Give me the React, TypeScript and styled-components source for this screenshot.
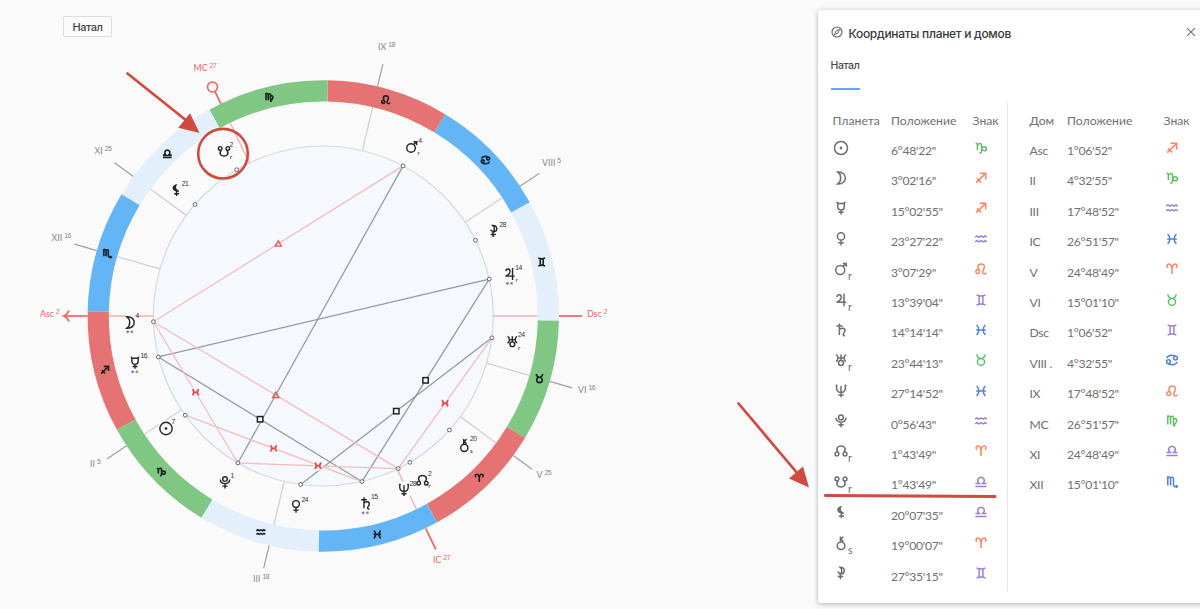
import React from 'react'
import styled, { createGlobalStyle } from 'styled-components'

const GlobalStyle = createGlobalStyle`
  * {
    box-sizing: border-box;
  }
  body {
    margin: 0;
    background-color: #fafafa;
    font-family: Lato, 'Open Sans', sans-serif;
    overflow: hidden;
  }
`

type GlyphShape = { line: string; fill?: string }

// all glyphs are drawn around 0,0 in a 16px box
const PLANETS: Record<string, GlyphShape> = {
  sun: {
    line: 'M-6.5 0A6.5 6.5 0 1 0 6.5 0A6.5 6.5 0 1 0 -6.5 0Z',
    fill: 'M-1.4 0A1.4 1.4 0 1 0 1.4 0A1.4 1.4 0 1 0 -1.4 0Z',
  },
  moon: { line: 'M-3.2 -6C1.8 -6.3 4.4 -3.2 4.4 0S1.8 6.3 -3.2 6C.6 3.6 .6 -3.6 -3.2 -6Z' },
  mercury: {
    line: 'M-4.2 -6.2C-3.9 -5 -3.2 -4.5 -2 -4.5H2C3.2 -4.5 3.9 -5 4.2 -6.2M-3.3 -4.5V-1.2C-3.3 .8 -1.8 2 0 2S3.3 .8 3.3 -1.2V-4.5M0 2V6.5M-2.6 4.3H2.6',
  },
  venus: { line: 'M-3.6 -2.6A3.6 3.6 0 1 0 3.6 -2.6A3.6 3.6 0 1 0 -3.6 -2.6ZM0 1V6.5M-2.8 3.8H2.8' },
  mars: { line: 'M-5.3 1A4.5 4.5 0 1 0 3.7 1A4.5 4.5 0 1 0 -5.3 1ZM2 -2.4L5 -5.5M1.8 -5.6H5.2V-2.2' },
  jupiter: { line: 'M-4 -3C-3.8 -6 .3 -6 .3 -2.9C.3 -.6 -1.6 1.2 -4.4 2.2H5.2M3 -6.3V6.3' },
  saturn: { line: 'M-1.6 -6.5V5M-4.6 -3.9H1.6M-1.6 -.4C0 -2.4 4 -2.4 4 .4C4 2.4 2.2 3 2.2 4.6C2.2 5.6 3.2 6 4.2 5.6' },
  uranus: {
    line: 'M-5 -5.4C-2.4 -4.4 -2.4 .6 -5 1.6M5 -5.4C2.4 -4.4 2.4 .6 5 1.6M-3.2 -2H3.2M0 -5.6V.6M-2.5 2.9A2.5 2.5 0 1 0 2.5 2.9A2.5 2.5 0 1 0 -2.5 2.9Z',
  },
  neptune: { line: 'M-4.4 -5.6C-5 -.6 -3.2 1.6 0 1.6S5 -.6 4.4 -5.6M0 -5V6.2M-2.7 4H2.7M-5.2 -4.9L-4.3 -5.8L-3.6 -5.2M5.2 -4.9L4.3 -5.8L3.6 -5.2' },
  pluto: {
    line: 'M-2.4 -3.6A2.4 2.4 0 1 0 2.4 -3.6A2.4 2.4 0 1 0 -2.4 -3.6ZM-5 -3.2C-4.6 2.6 4.6 2.6 5 -3.2M0 1.2V6.2M-2.7 3.8H2.7',
  },
  northNode: {
    line: 'M-5.9 3A1.9 1.9 0 1 0 -2.1 3A1.9 1.9 0 1 0 -5.9 3ZM2.1 3A1.9 1.9 0 1 0 5.9 3A1.9 1.9 0 1 0 2.1 3ZM-2.8 1.5C-6 -3 -2.8 -5 0 -5S6 -3 2.8 1.5',
  },
  southNode: {
    line: 'M-5.9 -3A1.9 1.9 0 1 0 -2.1 -3A1.9 1.9 0 1 0 -5.9 -3ZM2.1 -3A1.9 1.9 0 1 0 5.9 -3A1.9 1.9 0 1 0 2.1 -3ZM-2.8 -1.5C-6 3 -2.8 5 0 5S6 3 2.8 -1.5',
  },
  lilith: {
    line: 'M.4 .8V6.3M-2.2 4H3',
    fill: 'M1.4 -6.3C-5.6 -5.6 -5.6 1 1.8 2.1C3.2 1.9 3.2 .8 2.4 .3C-.6 -.6 -.8 -4.2 1.4 -6.3Z',
  },
  chiron: {
    line: 'M-3.8 2.7A3.8 3.8 0 1 0 3.8 2.7A3.8 3.8 0 1 0 -3.8 2.7ZM-.6 -6.5V-.8M2.4 -6.3L-.4 -3.9L2.4 -1.7',
  },
  selena: {
    line: 'M-1 -5.8C4.6 -6 4.6 .8 -.6 1C1.2 -.8 1.4 -3.8 -1 -5.8ZM-.6 1V6.3M-3.2 3.6H2.2M-3.4 -1.4L-.6 1',
  },
}

const SIGNS: Record<string, GlyphShape> = {
  aries: { line: 'M0 5V1C0 -3.4 -1.4 -5 -3.1 -5C-5.4 -5 -5.6 -2 -3.8 -1.4M0 1C0 -3.4 1.4 -5 3.1 -5C5.4 -5 5.6 -2 3.8 -1.4' },
  taurus: { line: 'M-3.6 1.9A3.6 3.4 0 1 0 3.6 1.9A3.6 3.4 0 1 0 -3.6 1.9ZM-4.3 -5.6C-3.4 -2.4 -2 -1.5 0 -1.5S3.4 -2.4 4.3 -5.6' },
  gemini: { line: 'M-4.4 -5C-2 -4 2 -4 4.4 -5M-4.4 5C-2 4 2 4 4.4 5M-1.9 -4.3V4.3M1.9 -4.3V4.3' },
  cancer: {
    line: 'M-5.2 -2C-3.6 -5.6 2.4 -5.4 5 -3M5.2 2C3.6 5.6 -2.4 5.4 -5 3M1.6 -1.9A1.9 1.9 0 1 0 5.4 -1.9A1.9 1.9 0 1 0 1.6 -1.9ZM-5.4 1.7A1.9 1.9 0 1 0 -1.6 1.7A1.9 1.9 0 1 0 -5.4 1.7Z',
  },
  leo: {
    line: 'M-5.2 2.6A2 2 0 1 0 -1.2 2.6A2 2 0 1 0 -5.2 2.6ZM-1.6 1.6C-3.4 -1.2 -4 -5 .2 -5C4.4 -5 3.8 -1.8 2.4 .8C1 3.4 1.8 5 3.4 5C4.4 5 5 4.4 5.2 3.6',
  },
  virgo: { line: 'M-5.2 -4.4L-4.2 -5V3.4M-4.2 -4C-3.2 -5.2 -1.4 -5.2 -1.4 -3.4V3.4M-1.4 -4C-.4 -5.2 1.5 -5.2 1.5 -3.4V2.4C1.5 4 2.4 4.8 3.2 5.2M1.5 -1.4C3 -3.4 5.2 -2.2 4.6 .4C4.2 2.4 2.6 3.6 .8 4.6' },
  libra: { line: 'M-5.6 4.6H5.6M-5.6 1.6H-1.6C-5 -1.4 -2.8 -4.8 0 -4.8S5 -1.4 1.6 1.6H5.6' },
  scorpio: { line: 'M-5.2 -4.4L-4.2 -5V3.4M-4.2 -4C-3.2 -5.2 -1.4 -5.2 -1.4 -3.4V3.4M-1.4 -4C-.4 -5.2 1.5 -5.2 1.5 -3.4V2.4C1.5 4.6 3 5.2 5 4.6M3.8 3.2L5.4 4.5L4.2 5.8' },
  sagittarius: { line: 'M-4.8 4.6L4.6 -4.6M-1.4 -4.7H4.7V1.4M-4 .4L.2 4.4' },
  capricorn: { line: 'M-5.4 -4.8C-4 -5 -3.6 -3.8 -3.6 -2.4V2M-3.6 -2.4C-3 -4.6 .6 -6 .6 -2.4V2.4C.6 4 -.4 5 -1.6 5.2M.6 .8C1.4 -1.8 5.4 -1.8 5.4 .8C5.4 3.6 1.6 3.4 .6 .8' },
  aquarius: { line: 'M-5.8 -1.8L-4 -3L-2 -1.8L0 -3L2.2 -1.8L3.9 -3L5.8 -1.8M-5.8 2.8L-4 1.6L-2 2.8L0 1.6L2.2 2.8L3.9 1.6L5.8 2.8' },
  pisces: { line: 'M-4.4 -5C-1.4 -2.4 -1.4 2.4 -4.4 5M4.4 -5C1.4 -2.4 1.4 2.4 4.4 5M-4.8 0H4.8' },
}

const SIGN_ORDER = [
  'aries',
  'taurus',
  'gemini',
  'cancer',
  'leo',
  'virgo',
  'libra',
  'scorpio',
  'sagittarius',
  'capricorn',
  'aquarius',
  'pisces',
]
const RING_COLORS = ['#e57373', '#81c784', '#e3effb', '#64b5f6']
const SIGN_COLORS = ['#f98660', '#5cbf62', '#9b7fd6', '#4f80dc']

const Shape = ({ shape, color, width = 1.5 }: { shape: GlyphShape; color: string; width?: number }) => (
  <>
    <path d={shape.line} fill="none" stroke={color} strokeWidth={width} />
    {shape.fill && <path d={shape.fill} fill={color} />}
  </>
)

const Page = styled.div`
  position: relative;
  display: flex;
  width: 1200px;
  height: 609px;
  overflow: hidden;
  background-color: #fafafa;
`

const ChartArea = styled.main`
  position: relative;
  flex: 0 0 818px;
`

const ChartSvg = styled.svg`
  display: block;
  font-family: Lato, sans-serif;
`

const Degree = styled.text`
  font-family: 'Liberation Sans', sans-serif;
  font-size: 6.8px;
  letter-spacing: -0.5px;
  fill: #333;
`

const HouseDegree = styled.tspan`
  font-family: 'Liberation Sans', sans-serif;
  font-size: 6.8px;
  letter-spacing: -0.4px;
`

const ModeButton = styled.button`
  position: absolute;
  top: 16px;
  left: 63px;
  width: 49px;
  height: 21px;
  padding: 0;
  border: 1px solid #dedede;
  border-radius: 2px;
  background-color: #fbfbfb;
  color: #444;
  font: 500 11px Inter, sans-serif;
  letter-spacing: -0.5px;
`

const Panel = styled.aside`
  flex: 0 0 400px;
  height: 593px;
  margin-top: 10px;
  border-radius: 3px;
  background-color: #fff;
  box-shadow: 0 1px 5px rgba(0, 0, 0, 0.3);
`

const PanelHeader = styled.header`
  display: flex;
  align-items: center;
  width: 382px;
  height: 44px;
  padding: 0 4px 0 13px;
`

const PanelTitle = styled.h1`
  flex: 1;
  margin: 3px 0 0 5.5px;
  color: #383838;
  font: 500 12px/16px Inter, sans-serif;
  letter-spacing: -0.3px;
`

const Tabs = styled.nav`
  display: flex;
  height: 36px;
  padding-left: 12.5px;
`

const Tab = styled.div`
  width: 29px;
  border-bottom: 2px solid #64a8f5;
  color: #484848;
  font: 500 10.5px/24px Inter, sans-serif;
  letter-spacing: -0.4px;
  white-space: nowrap;
`

const Tables = styled.div`
  display: flex;
  height: 488px;
  margin-top: 13px;
`

const Table = styled.section<{ $left: number; $width: number }>`
  width: ${({ $width }) => $width}px;
  padding: 2.5px 0 0 ${({ $left }) => $left}px;
  color: #707070;
  & + & {
    border-left: 1px solid #e6e6e6;
  }
`

const Row = styled.div<{ $columns: string }>`
  display: grid;
  grid-template-columns: ${({ $columns }) => $columns};
  align-items: center;
  height: 30.4px;
  font-size: 12.2px;
  line-height: 16px;
  letter-spacing: -0.32px;
  white-space: nowrap;
`

const HeadCell = styled.span`
  font-size: 12.2px;
  letter-spacing: 0;
`

const GlyphCell = styled.span`
  display: flex;
  height: 23px;
  svg {
    display: block;
  }
`

const Motion = styled.span`
  margin: 7px 0 0 -0.5px;
  font-size: 10.5px;
  line-height: 16px;
`

const Annotations = styled.svg`
  position: absolute;
  top: 0;
  left: 0;
  pointer-events: none;
`

const CX = 323.3
const CY = 316
const ASC = 241.114

const point = (longitude: number, r: number): [number, number] => {
  const a = ((longitude - ASC) * Math.PI) / 180
  return [CX - r * Math.cos(a), CY + r * Math.sin(a)]
}

const ringPath = (start: number) => {
  const [x1, y1] = point(start, 235.7)
  const [x2, y2] = point(start + 30, 235.7)
  const [x3, y3] = point(start + 30, 214.5)
  const [x4, y4] = point(start, 214.5)
  return `M${x1} ${y1}A235.7 235.7 0 0 0 ${x2} ${y2}L${x3} ${y3}A214.5 214.5 0 0 1 ${x4} ${y4}Z`
}

const houses = [
  { name: 'Asc', cell: 'Asc', pos: '1°06\'52"', sign: 8, lon: 241.114, deg: '2', x: 40, y: 316.5, axis: true },
  { name: 'II', cell: 'II', pos: '4°32\'55"', sign: 9, lon: 274.549, deg: '5', x: 90, y: 467 },
  { name: 'III', cell: 'III', pos: '17°48\'52"', sign: 10, lon: 317.814, deg: '18', x: 253, y: 582 },
  { name: 'IC', cell: 'IC', pos: '26°51\'57"', sign: 11, lon: 356.866, deg: '27', x: 433, y: 562.5, axis: true },
  { name: 'V', cell: 'V', pos: '24°48\'49"', sign: 0, lon: 24.814, deg: '25', x: 536.5, y: 478 },
  { name: 'VI', cell: 'VI', pos: '15°01\'10"', sign: 1, lon: 45.019, deg: '16', x: 578, y: 392.5 },
  { name: 'Dsc', cell: 'Dsc', pos: '1°06\'52"', sign: 2, lon: 61.114, deg: '2', x: 587, y: 317, axis: true },
  { name: 'VIII', cell: 'VIII .', pos: '4°32\'55"', sign: 3, lon: 94.549, deg: '5', x: 542, y: 166 },
  { name: 'IX', cell: 'IX', pos: '17°48\'52"', sign: 4, lon: 137.814, deg: '18', x: 378, y: 50 },
  { name: 'MC', cell: 'MC', pos: '26°51\'57"', sign: 5, lon: 176.866, deg: '27', x: 193.5, y: 70.5, axis: true },
  { name: 'XI', cell: 'XI', pos: '24°48\'49"', sign: 6, lon: 204.814, deg: '25', x: 94.5, y: 154 },
  { name: 'XII', cell: 'XII', pos: '15°01\'10"', sign: 7, lon: 225.019, deg: '16', x: 51.5, y: 240.5 },
]

const planets = [
  { id: 'sun', pos: '6°48\'22"', sign: 9, lon: 276.806, deg: '7', x: 166, y: 428.5 },
  { id: 'moon', pos: '3°02\'16"', sign: 8, lon: 243.038, deg: '4', x: 130, y: 322.5, dots: true },
  { id: 'mercury', pos: '15°02\'55"', sign: 8, lon: 255.049, deg: '16', x: 135, y: 362.5, dots: true },
  { id: 'venus', pos: '23°27\'22"', sign: 10, lon: 323.456, deg: '24', x: 296, y: 506.5 },
  { id: 'mars', pos: '3°07\'29"', sign: 4, lon: 123.125, deg: '4', x: 411.8, y: 147, motion: 'r' },
  { id: 'jupiter', pos: '13°39\'04"', sign: 2, lon: 73.651, deg: '14', x: 509.7, y: 274, motion: 'r', dots: true },
  { id: 'saturn', pos: '14°14\'14"', sign: 11, lon: 344.237, deg: '15', x: 365.5, y: 503.5, dots: true },
  { id: 'uranus', pos: '23°44\'13"', sign: 1, lon: 53.737, deg: '24', x: 512.3, y: 341.5, motion: 'r' },
  { id: 'neptune', pos: '27°14\'52"', sign: 11, lon: 357.248, deg: '28', x: 404, y: 490 },
  { id: 'pluto', pos: '0°56\'43"', sign: 10, lon: 300.945, deg: '1', x: 225, y: 482.5 },
  { id: 'northNode', pos: '1°43\'49"', sign: 0, lon: 1.73, deg: '2', x: 422.5, y: 480.3, motion: 'r' },
  { id: 'southNode', pos: '1°43\'49"', sign: 6, lon: 181.73, deg: '2', x: 224, y: 151.3, motion: 'r' },
  { id: 'lilith', pos: '20°07\'35"', sign: 6, lon: 200.126, deg: '21', x: 176.2, y: 190 },
  { id: 'chiron', pos: '19°00\'07"', sign: 0, lon: 19.002, deg: '20', x: 464.3, y: 445.3, motion: 's' },
  { id: 'selena', pos: '27°35\'15"', sign: 2, lon: 87.588, deg: '28', x: 493.7, y: 231 },
]

const aspects: [string, string, string][] = [
  ['mars', 'pluto', 'opposition'],
  ['mercury', 'jupiter', 'opposition'],
  ['mercury', 'saturn', 'square'],
  ['jupiter', 'saturn', 'square'],
  ['uranus', 'venus', 'square'],
  ['moon', 'mars', 'trine'],
  ['moon', 'neptune', 'trine'],
  ['moon', 'pluto', 'sextile'],
  ['sun', 'saturn', 'sextile'],
  ['pluto', 'neptune', 'sextile'],
  ['uranus', 'neptune', 'sextile'],
]

const aspectLines = aspects.map(([from, to, kind]) => {
  const a = point(planets.find((p) => p.id === from)!.lon, 170)
  const b = point(planets.find((p) => p.id === to)!.lon, 170)
  const hard = kind === 'opposition' || kind === 'square'
  return { a, b, kind, hard, mid: [(a[0] + b[0]) / 2, (a[1] + b[1]) / 2] }
})

const AspectMark = ({ kind }: { kind: string }) => {
  if (kind === 'square') return <rect x="-2.7" y="-2.7" width="5.4" height="5.4" fill="#f5f9fd" stroke="#222" strokeWidth="1.5" />
  if (kind === 'trine') return <path d="M0 -3L3.1 2.4H-3.1Z" fill="none" stroke="#ee5050" strokeWidth="1.3" />
  return <path d="M-3.2 -3C-1.2 -1.4 -1.2 1.4 -3.2 3M3.2 -3C1.2 -1.4 1.2 1.4 3.2 3M-2.6 0H2.6" fill="none" stroke="#ee4444" strokeWidth="1.9" />
}

const ChartWheel: React.FunctionComponent = () => (
  <ChartSvg width="818" height="609" viewBox="0 0 818 609">
    <circle cx={CX} cy={CY} r="170" fill="#f5f9fd" stroke="#d4dadf" strokeWidth="1.2" />
    {SIGN_ORDER.map((sign, i) => {
      const [x, y] = point(i * 30 + 15, 225)
      return (
        <g key={sign}>
          <path d={ringPath(i * 30)} fill={RING_COLORS[i % 4]} />
          <g transform={`translate(${x} ${y}) scale(.78)`}>
            <Shape shape={SIGNS[sign]} color="#1c2422" width={2.1} />
          </g>
        </g>
      )
    })}

    {houses.map((house) => {
      const [x1, y1] = point(house.lon, 170)
      const [x2, y2] = point(house.lon, 214.5)
      const [x3, y3] = point(house.lon, 235.7)
      const [x4, y4] = point(house.lon, house.name === 'MC' ? 249.5 : 259)
      return (
        <g key={house.name}>
          <line x1={x1} y1={y1} x2={x2} y2={y2} stroke={house.axis ? '#f6aeae' : '#d2d2d2'} strokeWidth="1.3" />
          <line x1={x3} y1={y3} x2={x4} y2={y4} stroke={house.axis ? '#f06262' : '#a0a0a0'} strokeWidth={house.axis ? 1.7 : 1.2} />
          <text x={house.x} y={house.y} fontSize="8.8" fill={house.axis ? '#ee6464' : '#868686'}>
            {house.name}
            <HouseDegree dx="2" dy="-3">
              {house.deg}
            </HouseDegree>
          </text>
        </g>
      )
    })}
    <path d="M69 310.5C67.6 313.6 66 315.2 63.8 316C66 316.8 67.6 318.4 69 321.5" fill="none" stroke="#f06262" strokeWidth="1.7" />
    <circle cx="212.5" cy="87" r="5" fill="#fafafa" stroke="#f06262" strokeWidth="1.6" />

    {aspectLines.map(({ a, b, hard }, i) => (
      <line key={i} x1={a[0]} y1={a[1]} x2={b[0]} y2={b[1]} stroke={hard ? '#96999c' : '#f6baba'} strokeWidth="1.25" />
    ))}
    {aspectLines.map(({ kind, mid }, i) =>
      kind === 'opposition' ? null : (
        <g key={i} transform={`translate(${mid[0]} ${mid[1]})`}>
          {kind === 'sextile' && <circle r="5" fill="#f5f9fd" />}
          <AspectMark kind={kind} />
        </g>
      ),
    )}

    {planets.map((planet) => (
      <circle key={planet.id} cx={planet.x} cy={planet.y} r="8.5" fill="#fafafa" />
    ))}
    {planets.map((planet) => {
      const [px, py] = point(planet.lon, 170)
      return (
        <g key={planet.id}>
          <circle cx={px} cy={py} r="1.9" fill="#fff" stroke="#666" strokeWidth="1" />
          <g transform={`translate(${planet.x} ${planet.y})`}>
            <g transform="scale(.95)">
              <Shape shape={PLANETS[planet.id]} color="#262626" width={1.5} />
            </g>
            <Degree x={planet.id === 'mars' ? 6.4 : 5.6} y="-4.2">
              {planet.deg}
            </Degree>
            {planet.motion && (
              <text x="5.8" y="8" fontSize="6.5" fill="#333">
                {planet.motion}
              </text>
            )}
            {planet.dots && (
              <>
                <circle cx="-2.3" cy="9.3" r="1.4" fill="#b45ae0" />
                <circle cx="1.9" cy="9.3" r="1.4" fill="#6db33a" />
              </>
            )}
          </g>
        </g>
      )
    })}
  </ChartSvg>
)

const TableGlyph = ({ shape, color }: { shape: GlyphShape; color: string }) => (
  <svg width="16" height="16" viewBox="-8 -8 16 16">
    <Shape shape={shape} color={color} />
  </svg>
)

const PLANET_COLUMNS = '58.5px 81.5px 26px'
const HOUSE_COLUMNS = '37.5px 96.5px 26px'

const App: React.FunctionComponent = () => {
  return (
    <Page>
      <GlobalStyle />
      <ChartArea>
        <ChartWheel />
        <ModeButton>Натал</ModeButton>
      </ChartArea>

      <Panel>
        <PanelHeader>
          <svg width="12" height="12" viewBox="0 0 12 12" fill="none" stroke="#6a6a6a">
            <circle cx="6" cy="6" r="5" strokeWidth="1.2" />
            <path d="M8.6 3.4L7 7L3.4 8.6L5 5Z" />
          </svg>
          <PanelTitle>Координаты планет и домов</PanelTitle>
          <svg width="10" height="10" viewBox="0 0 10 10" stroke="#777" strokeWidth="1.2">
            <path d="M1.2 1.2L8.8 8.8M8.8 1.2L1.2 8.8" />
          </svg>
        </PanelHeader>
        <Tabs>
          <Tab>Натал</Tab>
        </Tabs>
        <Tables>
          <Table $left={14.5} $width={189}>
            <Row $columns={PLANET_COLUMNS}>
              <HeadCell>Планета</HeadCell>
              <HeadCell>Положение</HeadCell>
              <HeadCell>Знак</HeadCell>
            </Row>
            {planets.map((planet) => (
              <Row key={planet.id} $columns={PLANET_COLUMNS}>
                <GlyphCell>
                  <TableGlyph shape={PLANETS[planet.id]} color="#6e6e6e" />
                  {planet.motion && <Motion>{planet.motion}</Motion>}
                </GlyphCell>
                <span>{planet.pos}</span>
                <GlyphCell>
                  <TableGlyph shape={SIGNS[SIGN_ORDER[planet.sign]]} color={SIGN_COLORS[planet.sign % 4]} />
                </GlyphCell>
              </Row>
            ))}
          </Table>
          <Table $left={21.5} $width={193}>
            <Row $columns={HOUSE_COLUMNS}>
              <HeadCell>Дом</HeadCell>
              <HeadCell>Положение</HeadCell>
              <HeadCell>Знак</HeadCell>
            </Row>
            {houses.map((house) => (
              <Row key={house.name} $columns={HOUSE_COLUMNS}>
                <span>{house.cell}</span>
                <span>{house.pos}</span>
                <GlyphCell>
                  <TableGlyph shape={SIGNS[SIGN_ORDER[house.sign]]} color={SIGN_COLORS[house.sign % 4]} />
                </GlyphCell>
              </Row>
            ))}
          </Table>
        </Tables>
      </Panel>

      <Annotations width="1200" height="609" viewBox="0 0 1200 609" fill="none" stroke="#d04a40" strokeLinecap="round">
        <path d="M127.5 73.5L187 121" strokeWidth="2.7" />
        <path d="M199.5 133L190 113.3L178.3 127.7Z" fill="#d04a40" stroke="none" />
        <circle cx="223" cy="153.7" r="24.8" strokeWidth="2.6" />
        <path d="M738.5 403.5L798 474" strokeWidth="2.7" />
        <path d="M809 487.5L803 466.5L789 478.5Z" fill="#d04a40" stroke="none" />
        <path d="M825.5 495.5L995 496.5" strokeWidth="3" />
      </Annotations>
    </Page>
  )
}

export default App
